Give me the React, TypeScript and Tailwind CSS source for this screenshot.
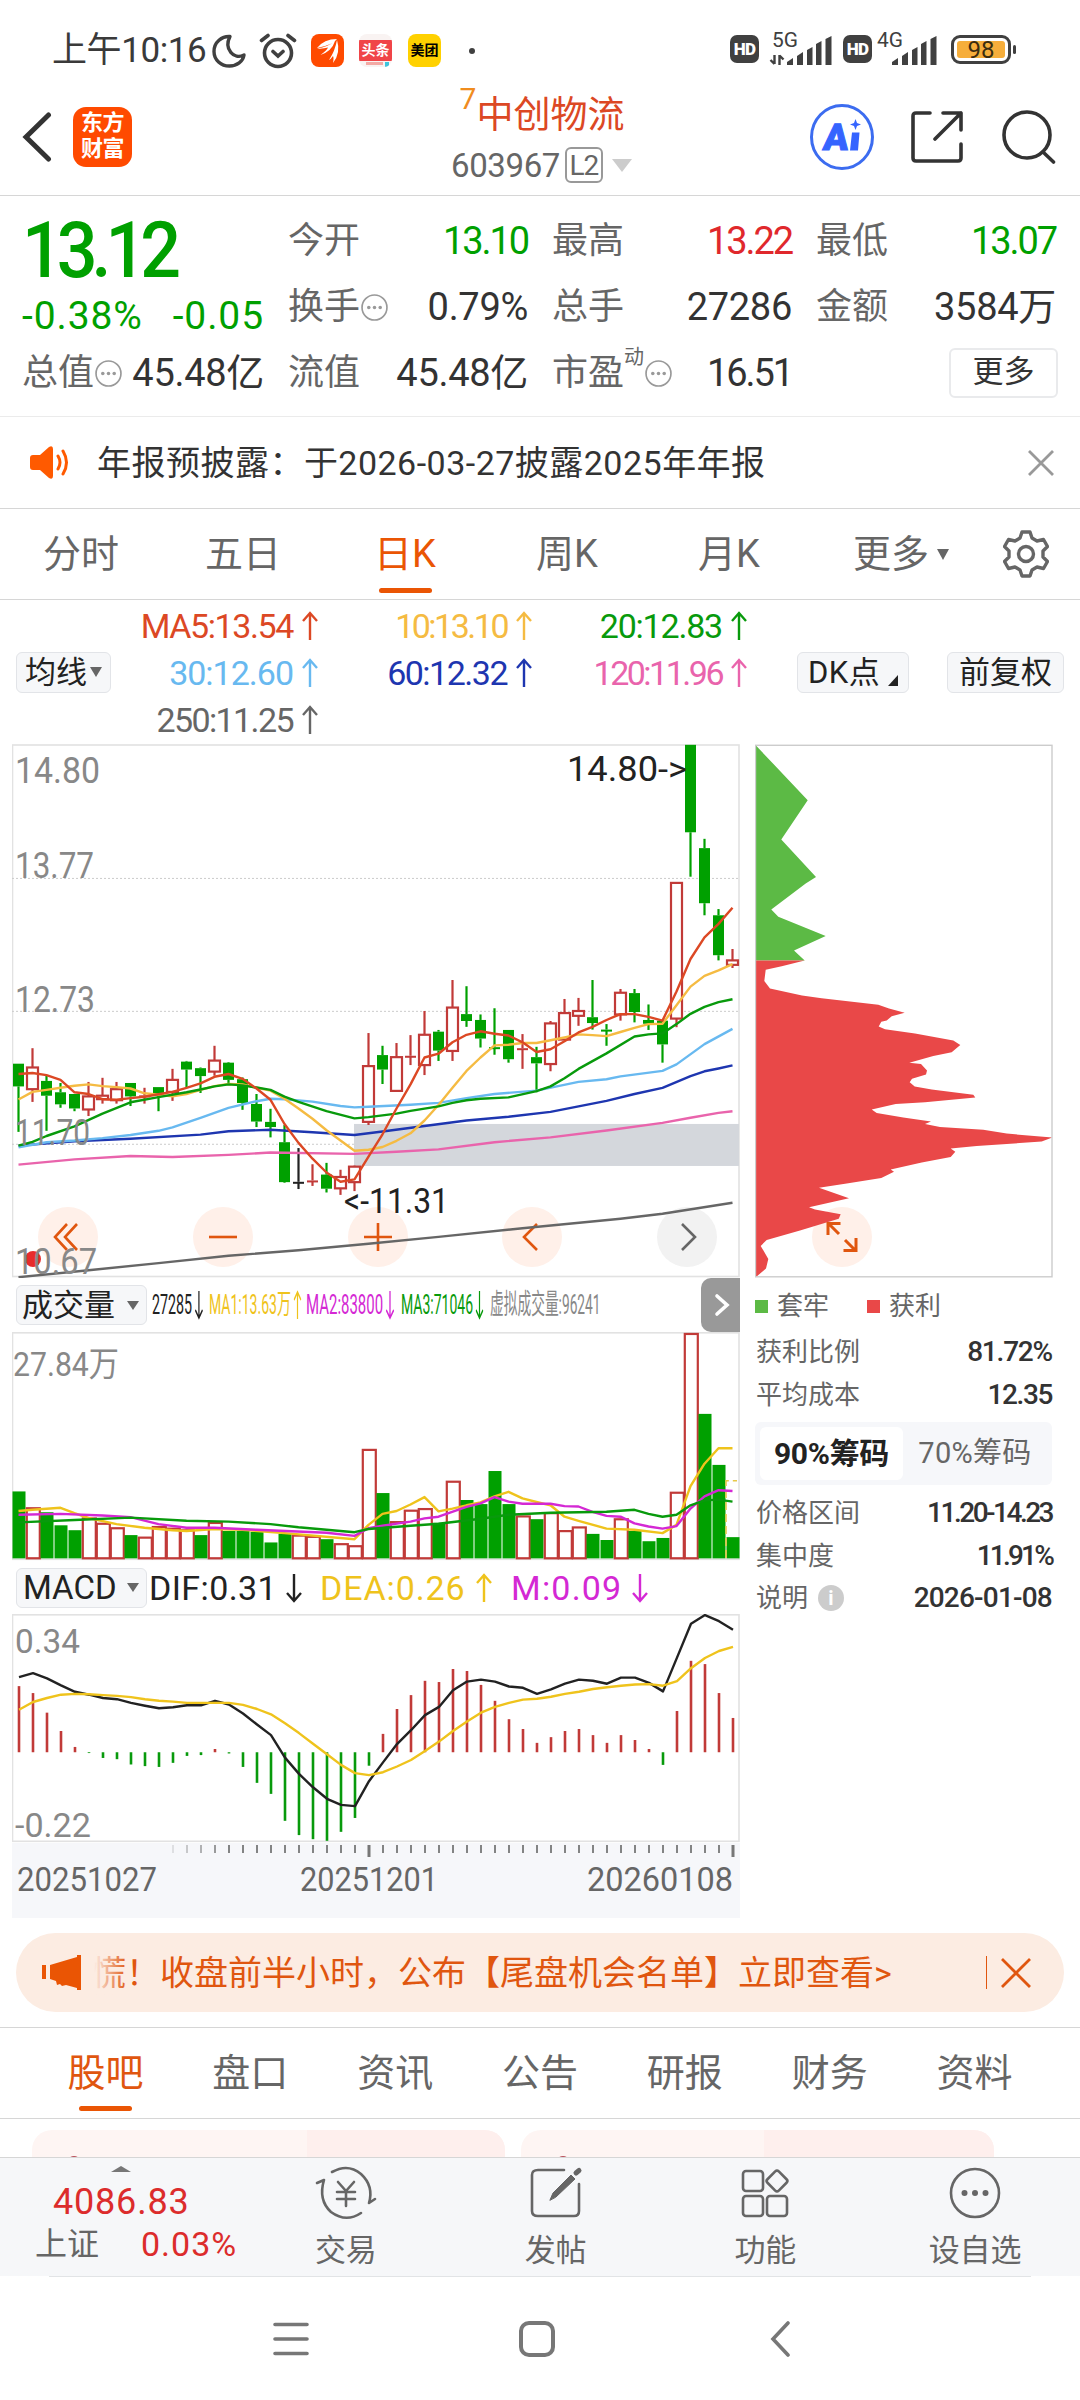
import type { ReactNode } from 'react'

const RED = '#c13a38'
const GREEN = '#00a000'
const FONT = "font-[Roboto,'Noto_Sans_CJK_SC',sans-serif]"

const STEP = 14

// [type, high, body top, body bottom, low]
const candles: [string, number, number, number, number][] = [
  ['g', 940, 940, 1006, 1138], ['r', 895, 951, 1014, 1051], ['g', 975, 990, 1033, 1135], ['g', 996, 1023, 1058, 1068],
  ['g', 1028, 1028, 1070, 1078], ['r', 993, 1035, 1073, 1092], ['r', 981, 1033, 1043, 1056], ['r', 993, 1014, 1046, 1056],
  ['g', 996, 996, 1035, 1063], ['r', 1010, 1032, 1036, 1056], ['g', 1008, 1008, 1030, 1078], ['r', 955, 987, 1022, 1048],
  ['g', 932, 934, 957, 1010], ['g', 951, 953, 976, 1025], ['r', 888, 931, 963, 975], ['g', 935, 937, 987, 998],
  ['g', 980, 985, 1054, 1074], ['g', 1028, 1057, 1108, 1124], ['g', 1071, 1109, 1124, 1154], ['g', 1118, 1168, 1284, 1286],
  ['k', 1185, 1283, 1286, 1304], ['r', 1232, 1279, 1282, 1295], ['g', 1228, 1262, 1303, 1314], ['r', 1248, 1269, 1302, 1321],
  ['r', 1236, 1239, 1284, 1310], ['r', 851, 947, 1109, 1118], ['g', 888, 915, 957, 999], ['r', 880, 921, 1019, 1021],
  ['r', 857, 917, 920, 944], ['r', 787, 856, 944, 973], ['g', 842, 847, 902, 932], ['r', 697, 777, 903, 932],
  ['g', 715, 796, 816, 833], ['g', 797, 813, 867, 893], ['g', 779, 892, 896, 914], ['g', 842, 842, 927, 937],
  ['r', 854, 895, 900, 955], ['g', 891, 921, 939, 1023], ['r', 816, 823, 941, 962], ['r', 752, 793, 870, 870],
  ['r', 749, 787, 801, 830], ['g', 697, 805, 822, 841], ['g', 825, 841, 845, 888], ['r', 723, 734, 797, 815],
  ['g', 723, 735, 790, 820], ['g', 768, 813, 824, 842], ['g', 812, 815, 884, 937], ['r', 413, 415, 809, 834],
  ['g', 14, 14, 268, 397], ['g', 287, 314, 474, 509], ['g', 491, 509, 625, 640], ['r', 607, 640, 653, 662],
]

const ma5 = [970, 967, 973, 987, 1023, 1028, 1043, 1045, 1040, 1036, 1029, 1022, 1010, 997, 978, 970, 984, 1012, 1045, 1115, 1170, 1216, 1256, 1283, 1276, 1210, 1145, 1070, 1000, 922, 911, 878, 856, 846, 853, 858, 878, 906, 898, 875, 849, 833, 813, 796, 796, 804, 815, 730, 636, 573, 534, 487]
const ma10 = [1044, 1022, 1016, 1010, 1004, 1000, 1005, 1008, 1012, 1026, 1030, 1035, 1028, 1016, 1005, 999, 1000, 1010, 1018, 1042, 1070, 1100, 1133, 1163, 1193, 1190, 1182, 1164, 1142, 1105, 1060, 1010, 961, 922, 887, 885, 880, 880, 872, 864, 855, 857, 860, 848, 836, 825, 824, 770, 716, 685, 669, 651]

// sparse lines are kept as index, value pairs
const ma20 = [0, 1178, 1, 1167, 2, 1150, 4, 1122, 6, 1085, 8, 1052, 10, 1037, 12, 1023, 13, 1015, 14, 1006, 15, 1000, 16, 1003, 17, 1009, 18, 1016, 19, 1036, 20, 1051, 22, 1078, 24, 1099, 25, 1095, 27, 1085, 28, 1077, 30, 1064, 31, 1054, 32, 1046, 33, 1042, 35, 1038, 37, 1020, 38, 1006, 39, 982, 40, 955, 42, 910, 44, 861, 45, 855, 46, 852, 47, 825, 48, 795, 49, 775, 50, 761, 51, 753]
const ma30 = [0, 1183, 2, 1168, 4, 1163, 6, 1156, 8, 1147, 10, 1135, 11, 1125, 13, 1097, 15, 1068, 17, 1049, 18, 1042, 19, 1043, 21, 1050, 23, 1063, 24, 1067, 25, 1065, 28, 1059, 30, 1054, 32, 1040, 34, 1028, 37, 1018, 40, 993, 42, 985, 43, 977, 46, 961, 47, 942, 49, 883, 51, 839]
const ma60 = [0, 1178, 4, 1165, 8, 1158, 13, 1146, 15, 1136, 18, 1132, 21, 1139, 24, 1147, 26, 1137, 29, 1121, 32, 1105, 35, 1094, 38, 1080, 40, 1064, 42, 1048, 44, 1028, 46, 1010, 48, 976, 49, 962, 50, 954, 51, 945]
const ma120 = [0, 1233, 4, 1218, 8, 1208, 11, 1211, 15, 1205, 18, 1198, 24, 1202, 27, 1196, 30, 1189, 34, 1168, 38, 1154, 42, 1134, 46, 1112, 48, 1097, 50, 1083, 51, 1078]
const ma250 = [0, 1560, 5, 1540, 10, 1519, 15, 1498, 20, 1482, 25, 1463, 30, 1443, 36, 1418, 43, 1390, 46, 1376, 51, 1344]

const volumes = [518, 558, 569, 601, 613, 583, 596, 607, 625, 630, 604, 608, 612, 625, 594, 615, 615, 617, 643, 622, 625, 628, 635, 646, 651, 415, 522, 592, 564, 560, 595, 493, 539, 549, 468, 549, 578, 586, 570, 614, 605, 622, 637, 585, 615, 640, 632, 520, 131, 328, 453, 630]
const volumeTypes = 'grgggrrrgrrrrgrgggggrrgrrrgrrrgrggggrgrrrggrgggrrggg'
const volMa1 = [0, 566, 1, 563, 3, 558, 4, 571, 5, 583, 7, 598, 9, 607, 11, 613, 12, 615, 14, 610, 16, 612, 19, 620, 24, 635, 25, 600, 26, 573, 27, 566, 28, 550, 29, 532, 30, 567, 31, 560, 32, 552, 33, 545, 34, 530, 35, 519, 36, 535, 37, 544, 38, 552, 39, 580, 40, 590, 42, 609, 44, 612, 46, 620, 47, 600, 48, 505, 49, 450, 50, 412, 51, 412]
const volMa2 = [0, 575, 3, 573, 6, 577, 8, 581, 10, 598, 12, 607, 14, 607, 17, 612, 22, 619, 24, 627, 25, 608, 26, 602, 28, 592, 29, 584, 30, 580, 32, 556, 33, 547, 34, 532, 35, 543, 36, 548, 38, 548, 39, 554, 40, 555, 41, 568, 42, 578, 43, 580, 44, 596, 45, 604, 46, 609, 47, 603, 48, 560, 49, 530, 50, 515, 51, 517]
const volMa3 = [0, 594, 4, 588, 8, 582, 12, 590, 15, 592, 18, 598, 20, 606, 24, 618, 25, 610, 28, 602, 30, 597, 33, 585, 35, 575, 38, 570, 42, 568, 44, 563, 45, 573, 46, 580, 47, 575, 48, 552, 49, 540, 50, 538, 51, 543]

const macd = [995, 1012, 1060, 1105, 1144, 1159, 1171, 1174, 1187, 1191, 1193, 1183, 1166, 1164, 1149, 1160, 1193, 1232, 1259, 1325, 1360, 1370, 1374, 1352, 1318, 1190, 1112, 1051, 1017, 982, 985, 953, 958, 992, 1031, 1076, 1100, 1134, 1120, 1105, 1100, 1115, 1134, 1115, 1127, 1149, 1188, 1056, 933, 941, 1012, 1073]
const dif = [973, 963, 976, 993, 1009, 1016, 1024, 1027, 1036, 1043, 1049, 1047, 1042, 1042, 1031, 1040, 1062, 1089, 1115, 1170, 1210, 1243, 1271, 1286, 1289, 1228, 1182, 1137, 1103, 1066, 1046, 1005, 984, 979, 984, 996, 999, 1014, 1003, 989, 979, 982, 989, 974, 974, 987, 1008, 925, 842, 821, 836, 857]
const dea = [1053, 1034, 1024, 1016, 1014, 1015, 1017, 1019, 1022, 1027, 1031, 1033, 1036, 1036, 1036, 1036, 1041, 1051, 1064, 1086, 1110, 1136, 1162, 1188, 1208, 1213, 1206, 1192, 1176, 1154, 1131, 1105, 1082, 1060, 1046, 1036, 1028, 1026, 1021, 1014, 1009, 1002, 998, 994, 991, 990, 994, 983, 951, 926, 909, 899]

const trapped = [47, 15, 203, 175, 124, 289, 228, 398, 197, 417, 94, 492, 115, 513, 257, 569, 162, 611, 194, 640, 47, 640]
const profit = [47, 640, 194, 640, 125, 657, 77, 667, 73, 700, 90, 722, 186, 742, 245, 750, 415, 769, 447, 780, 494, 792, 455, 802, 440, 815, 424, 818, 416, 832, 435, 840, 525, 852, 640, 873, 661, 886, 635, 907, 580, 918, 508, 937, 543, 941, 561, 960, 558, 971, 516, 984, 509, 994, 524, 1006, 575, 1015, 700, 1030, 706, 1038, 555, 1052, 467, 1057, 395, 1073, 410, 1083, 490, 1096, 573, 1108, 555, 1115, 600, 1124, 730, 1132, 800, 1143, 937, 1154, 905, 1166, 710, 1179, 632, 1186, 646, 1196, 632, 1211, 545, 1227, 452, 1247, 462, 1254, 424, 1272, 320, 1288, 237, 1300, 327, 1331, 207, 1357, 225, 1363, 302, 1377, 296, 1390, 180, 1424, 80, 1452, 62, 1469, 85, 1507, 78, 1535, 47, 1560]

const px = (i: number) => 18.5 + i * STEP
const py = (v: number) => v / 2.904
const vy = (v: number) => v / 2.45

const dense = (list: number[], y: (v: number) => number, dx = 0) => list.map((v, i) => `${px(i) + dx},${y(v).toFixed(1)}`).join(' ')
const sparse = (list: number[], y: (v: number) => number) => {
  const out: string[] = []
  for (let i = 0; i < list.length; i += 2) out.push(`${px(list[i])},${y(list[i + 1]).toFixed(1)}`)
  return out.join(' ')
}
const chip = (list: number[]) => {
  const out: string[] = []
  for (let i = 0; i < list.length; i += 2) out.push(`${(list[i] / 3).toFixed(1)},${py(list[i + 1]).toFixed(1)}`)
  return out.join(' ')
}

const Line = ({ points, color, w = 2.4 }: { points: string; color: string; w?: number }) => (
  <polyline points={points} fill="none" stroke={color} strokeWidth={w} strokeLinejoin="round" />
)

const Label = ({ x, y, w, size = 34, color = '#888', children }: { x: number; y: number; w: number; size?: number; color?: string; children: string }) => (
  <text x={x} y={y} textLength={w} lengthAdjust="spacingAndGlyphs" fontSize={size} fill={color}>
    {children}
  </text>
)

const Arrow = ({ down = false, className = '' }: { down?: boolean; className?: string }) => (
  <svg viewBox="0 0 16 30" className={`w-4 h-[30px] shrink-0 ${down ? 'rotate-180' : ''} ${className}`} fill="none" stroke="currentColor" strokeWidth="2.4">
    <path d="M8 29V2M1 10L8 2L15 10" />
  </svg>
)

const Dots = () => (
  <svg viewBox="0 0 26 26" className="w-[27px] h-[27px] shrink-0 ml-px" fill="none" stroke="#999" strokeWidth="1.6">
    <circle cx="13" cy="13" r="12" />
    <g fill="#999" stroke="none">
      <circle cx="7.5" cy="13" r="1.7" />
      <circle cx="13" cy="13" r="1.7" />
      <circle cx="18.5" cy="13" r="1.7" />
    </g>
  </svg>
)

const Signal = ({ text, transfer = false }: { text: string; transfer?: boolean }) => (
  <svg viewBox="0 0 62 34" className="w-[62px] h-[34px] overflow-visible" fill="#404040">
    <text x="2" y="14.500" fontSize="20" textLength="26" lengthAdjust="spacingAndGlyphs">{text}</text>
    {transfer && <path d="M4.500 23v9M4.500 32l-4 -4M9.500 33v-10M9.500 23.500l4 4" stroke="#404040" strokeWidth="2.4" fill="none" />}
    <path d="M17 33v-3l6 -4v7zM27 33v-9l6 -4v13zM37 33v-15l5.500 -3v18zM46 33v-21l5.500 -3v24zM55.500 33v-26l6 -3v29z" />
  </svg>
)

const Hd = () => (
  <div className="w-[29px] h-[28px] rounded-[7px] bg-[#404040] text-white text-[17px] leading-none font-black flex items-center justify-center tracking-[-0.600px]">HD</div>
)

const StatusBar = () => (
  <div className="h-[98px] flex items-center text-[#3a3a3a] pl-[52px] pr-[64px]">
    <span className="text-[35px] leading-none w-[158px] whitespace-nowrap tracking-[-0.400px] pt-[2px]">上午10:16</span>
    <svg viewBox="0 0 34 34" className="w-[34px] h-[34px] mt-1 ml-[2px]" fill="none" stroke="#404040" strokeWidth="3.4" strokeLinejoin="round">
      <path d="M18 2.500C10 2 2 8 2 17.500C2 26 9 32 17.500 32C25 32 31 27.500 32 21C22 26 11.500 15 18 2.500Z" />
    </svg>
    <svg viewBox="0 0 38 36" className="w-[38px] h-[36px] mt-1 ml-[13px]" fill="none" stroke="#404040" strokeWidth="3.6" strokeLinecap="round">
      <circle cx="19" cy="20" r="13.500" />
      <path d="M2.500 7.500L9 2.500M35.500 7.500L29 2.500M14 18.500l5 4.500l5 -4.500" />
    </svg>
    <svg viewBox="0 0 33 33" className="w-[33px] h-[33px] ml-[14px] mt-[2px]">
      <rect width="33" height="33" rx="8" fill="#ff4a00" />
      <path d="M6 14Q13 5 26 5Q22 11 6 14ZM6 14.500Q17 13 24 7Q21 17 9.500 21Q16 16 17 13.500Q12 15 6 14.500ZM18 26Q24 17 26 6Q30 19 22 29Q23 24 22 22Q20 25 18 26Z" fill="#fff" />
    </svg>
    <div className="ml-[15px] mt-[2px] w-[33px] h-[33px] rounded-[8px] bg-[#f9f3f2] overflow-hidden flex flex-col">
      <div className="mt-[6px] h-[21px] bg-[#f04448] text-white text-[14px] leading-[20px] font-bold text-center whitespace-nowrap">头条</div>
      <div className="ml-[7px] mt-[1px] flex gap-[2px]">
        <span className="w-[17px] h-[3px] bg-[#f3a9a4]" />
        <span className="w-[4px] h-[5px] bg-[#3fc4dc]" />
      </div>
    </div>
    <div className="ml-[16px] mt-[2px] w-[33px] h-[33px] rounded-[8px] bg-[#ffd100] text-black text-[14px] leading-[32px] font-bold text-center whitespace-nowrap">美团</div>
    <div className="ml-[28px] mt-[3px] w-[6px] h-[6px] rounded-full bg-[#404040]" />
    <div className="ml-auto flex items-center">
      <Hd />
      <div className="ml-[11px]"><Signal text="5G" transfer /></div>
      <div className="ml-[11px]"><Hd /></div>
      <div className="ml-[3px]"><Signal text="4G" /></div>
      <div className="ml-[14px] w-[60px] h-[29px] rounded-[9px] border-[3px] border-[#404040] p-[3px]">
        <div className="h-full rounded-[3px] bg-[#f6ae3b] text-[#3a2c10] text-[24px] leading-[18px] text-center">98</div>
      </div>
      <div className="ml-[2px] w-[3px] h-[9px] rounded-full bg-[#404040]" />
    </div>
  </div>
)

const Header = () => (
  <header className="h-[98px] border-b border-[#d6d6d6] flex items-center justify-between pl-[22px] pr-[24px] pb-[20px]">
    <div className="flex items-center w-[335px]">
      <svg viewBox="0 0 30 50" className="w-[30px] h-[50px]" fill="none" stroke="#333" strokeWidth="5" strokeLinecap="round">
        <path d="M26.500 3L4 25L26.500 47" />
      </svg>
      <div className="ml-[21px] w-[59px] h-[60px] rounded-[13px] bg-[#ff4a00] text-white text-[22px] leading-[26px] font-bold text-center pt-[3px] tracking-[-0.500px]">
        东方
        <br />
        财富
      </div>
    </div>
    <div className="flex flex-col items-center w-[190px] pt-[6px]">
      <div className="relative text-[37px] leading-[50px] h-[51px] text-[#dc4824] pl-[18px] whitespace-nowrap">
        <span className="absolute left-[1px] top-[-12px] text-[30px] leading-[40px] text-[#f08c1e]">7</span>
        中创物流
      </div>
      <div className="flex items-center text-[#666] text-[33px] leading-none h-[46px]">
        <span className="tracking-[-0.400px]">603967</span>
        <span className="ml-[5px] w-[38px] h-[36px] border-2 border-[#999] rounded-[6px] text-[28px] leading-[33px] text-center tracking-[-1px]">L2</span>
        <span className="ml-[9px] border-x-[10px] border-x-transparent border-t-[13px] border-t-[#ccc]" />
      </div>
    </div>
    <div className="flex items-center justify-end w-[330px]">
      <svg viewBox="0 0 64 66" className="w-[64px] h-[66px]">
        <ellipse cx="32" cy="33" rx="30.500" ry="31.500" fill="none" stroke="#3c6cf0" strokeWidth="3" />
        <text x="17" y="46" fontSize="37" fontWeight="900" fill="#3564ff" stroke="#3564ff" transform="skewX(-6)">A</text>
        <path d="M42 28.500h7.500l-1.500 18h-8zM45.500 15l1.500 4l4 1.500l-4 1.500l-1.500 4l-1.500 -4l-4 -1.500l4 -1.500z" fill="#3564ff" />
      </svg>
      <svg viewBox="0 0 52 52" className="ml-[37px] w-[52px] h-[52px]" fill="none" stroke="#333" strokeWidth="3.6" strokeLinecap="round" strokeLinejoin="round">
        <path d="M19 2H5Q2 2 2 5V47Q2 50 5 50H47Q50 50 50 47V33M32 2H50V19M50 2L24 28" />
      </svg>
      <svg viewBox="0 0 54 54" className="ml-[39px] w-[54px] h-[54px]" fill="none" stroke="#333" strokeWidth="3.6" strokeLinecap="round">
        <circle cx="25" cy="25" r="23" />
        <path d="M41 42L51.500 52" />
      </svg>
    </div>
  </header>
)

const Stat = ({ label, value, color = 'text-[#333]', dots = false, sup = '' }: { label: string; value: string; color?: string; dots?: boolean; sup?: string }) => (
  <div className="flex items-center justify-between h-[66px] whitespace-nowrap">
    <span className="text-[36px] leading-none text-[#666] flex items-center">
      {label}
      {sup && <span className="text-[20px] leading-none -mt-[32px]">{sup}</span>}
      {dots && <Dots />}
    </span>
    <span className={`text-[38px] leading-none ${value.includes('1') ? 'tracking-[-2.100px]' : 'tracking-[-0.300px]'} ${color}`}>{value}</span>
  </div>
)

const Quote = () => (
  <section className="h-[221px] border-b border-[#ebebeb] px-6 pt-[12px] grid grid-cols-4 gap-x-6 content-start">
    <div className="-ml-[2px]">
      <div className="h-[77px] text-[78px] leading-[86px] text-[#00a000] font-medium">
        <span className="inline-block origin-left scale-x-[0.920] tracking-[-6.500px]">13.12</span>
      </div>
      <div className="flex justify-between items-center h-[55px] pt-[7px] text-[39px] leading-none text-[#00a000] tracking-[0.900px]">
        <span>-0.38%</span>
        <span>-0.05</span>
      </div>
      <Stat label="总值" value="45.48亿" dots />
    </div>
    <div>
      <Stat label="今开" value="13.10" color="text-[#00a000]" />
      <Stat label="换手" value="0.79%" dots />
      <Stat label="流值" value="45.48亿" />
    </div>
    <div>
      <Stat label="最高" value="13.22" color="text-[#e0282c]" />
      <Stat label="总手" value="27286" />
      <Stat label="市盈" value="16.51" sup="动" dots />
    </div>
    <div>
      <Stat label="最低" value="13.07" color="text-[#00a000]" />
      <Stat label="金额" value="3584万" />
      <div className="flex justify-end h-[66px] items-center -mr-[2px]">
        <span className="w-[109px] h-[50px] border-2 border-[#e9eaec] rounded-[6px] text-[31px] leading-[44px] text-center text-[#333]">更多</span>
      </div>
    </div>
  </section>
)

const Notice = () => (
  <section className="h-[92px] border-b border-[#d6d6d6] flex items-center pl-[30px] pr-[25px]">
    <svg viewBox="0 0 39 33" className="w-[39px] h-[33px]" fill="#ff5a00">
      <path d="M3 9h7L19 1q4 -2 4 2v27q0 4 -4 2L10 24H3q-3 0 -3 -3V12q0 -3 3 -3z" />
      <path d="M28 10q4 6.500 0 13M33 5q7 11.500 0 23" fill="none" stroke="#ff5a00" strokeWidth="3" strokeLinecap="round" />
    </svg>
    <span className="ml-[28px] text-[34px] leading-none tracking-[0.480px] text-[#333] whitespace-nowrap">年报预披露：于2026-03-27披露2025年年报</span>
    <svg viewBox="0 0 28 28" className="ml-auto w-[28px] h-[28px]" stroke="#999" strokeWidth="2.8">
      <path d="M2 2L26 26M26 2L2 26" />
    </svg>
  </section>
)

const PeriodTabs = () => (
  <nav className="h-[91px] border-b border-[#d6d6d6] flex items-center text-[38px] leading-none text-[#666]">
    {['分时', '五日', '日K', '周K', '月K'].map((tab) => (
      <div key={tab} className={`relative w-[162px] h-full flex items-center justify-center ${tab === '日K' ? 'text-[#ea5504]' : ''}`}>
        {tab}
        {tab === '日K' && <span className="absolute bottom-[6px] w-[53px] h-[5px] rounded-full bg-[#ea5504]" />}
      </div>
    ))}
    <div className="w-[182px] flex items-center justify-center">
      更多
      <span className="ml-[8px] border-x-[6.500px] border-x-transparent border-t-[11px] border-t-[#666]" />
    </div>
    <svg viewBox="0 0 46 48" className="ml-[11px] w-[46px] h-[48px]" fill="none" stroke="#666" strokeWidth="3.4" strokeLinejoin="round">
      <path d="M19 2h8l2 6l5 3l6.500 -1.500l4 7l-4.500 4.500v6l4.500 4.500l-4 7l-6.500 -1.500l-5 3l-2 6h-8l-2 -6l-5 -3l-6.500 1.500l-4 -7l4.500 -4.500v-6l-4.500 -4.500l4 -7L12 11l5 -3z" />
      <circle cx="23" cy="24" r="7.500" />
    </svg>
  </nav>
)

const Ma = ({ text, color, spacing }: { text: string; color: string; spacing: string }) => (
  <div className={`h-[47px] pt-[2px] flex items-center justify-end gap-[9px] ${color}`}>
    <span className={spacing}>{text}</span>
    <Arrow />
  </div>
)

const MaLegend = () => (
  <section className="h-[144px] flex items-center pl-[16px] pr-[16px] text-[#222]">
    <div className="w-[95px] h-[41px] bg-[#f6f7f9] border border-[#e2e4e8] rounded-[6px] flex items-center justify-center text-[31px] leading-none">
      均线
      <span className="ml-[3px] border-x-[6px] border-x-transparent border-t-[10px] border-t-[#666]" />
    </div>
    <div className="w-[636px] grid grid-cols-[207px_214px_215px] text-[34px] leading-none whitespace-nowrap">
      <Ma text="MA5:13.54" color="text-[#dc4824]" spacing="tracking-[-1.400px]" />
      <Ma text="10:13.10" color="text-[#f5bb42]" spacing="tracking-[-2.500px]" />
      <Ma text="20:12.83" color="text-[#089a0c]" spacing="tracking-[-1.200px]" />
      <Ma text="30:12.60" color="text-[#68b9f0]" spacing="tracking-[-1px]" />
      <Ma text="60:12.32" color="text-[#1e36b0]" spacing="tracking-[-1.500px]" />
      <Ma text="120:11.96" color="text-[#e964ac]" spacing="tracking-[-2.500px]" />
      <Ma text="250:11.25" color="text-[#666]" spacing="tracking-[-1.600px]" />
    </div>
    <div className="ml-auto w-[112px] h-[41px] bg-[#f6f7f9] border border-[#e2e4e8] rounded-[6px] flex items-center pl-[10px] text-[31px] leading-none">
      <span className="tracking-[0.500px]">DK点</span>
      <svg viewBox="0 0 10 11" className="w-[10px] h-[11px] ml-[8px] mt-[17px]"><path d="M10 0V11H0z" fill="#222" /></svg>
    </div>
    <div className="ml-[38px] w-[117px] h-[41px] bg-[#f6f7f9] border border-[#e2e4e8] rounded-[6px] flex items-center justify-center text-[31px] leading-none">前复权</div>
  </section>
)

const CircleButton = ({ x, gray = false, d }: { x: number; gray?: boolean; d: string }) => (
  <g>
    <circle cx={x} cy="497" r="30" fill={gray ? '#f2f2f2' : '#fff0e9'} />
    <path transform={`translate(${x} 497)`} d={d} fill="none" stroke={gray ? '#666' : '#e0560f'} strokeWidth="2.6" />
  </g>
)

const KLine = () => (
  <svg viewBox="12 4 728 534" className="block w-[728px] h-[534px]">
    <rect x="12.500" y="5" width="726.500" height="531.500" fill="none" stroke="#e2e2e2" strokeWidth="1.600" />
    {[402, 788, 1174].map((v) => (
      <line key={v} x1="12" x2="739" y1={py(v)} y2={py(v)} stroke="#ccc" strokeDasharray="2 2" />
    ))}
    <CircleButton x={68} d="M-1 -13L-13 0L-1 13M9 -13L-3 0L9 13" />
    <CircleButton x={223} d="M-14 0H14" />
    <CircleButton x={378} d="M-14 0H14M0 -14V14" />
    <CircleButton x={532} d="M5 -13L-8 0L5 13" />
    <CircleButton x={687} gray d="M-5 -13L8 0L-5 13" />
    <rect x="354" y={py(1115)} width="385" height={py(122)} fill="#d4d7dc" />
    {candles.map(([type, high, top, bottom, low], i) => {
      const color = type === 'r' ? RED : type === 'g' ? GREEN : '#222'
      const x = px(i)
      const h = Math.max(py(bottom - top), 2)
      const hollow = type === 'r' && bottom - top > 9
      return (
        <g key={i}>
          <line x1={x} x2={x} y1={py(high)} y2={py(top)} stroke={color} strokeWidth="2.2" />
          <line x1={x} x2={x} y1={py(bottom)} y2={py(low)} stroke={color} strokeWidth="2.2" />
          {hollow ? (
            <rect x={x - 5.5} y={py(top)} width="11" height={h} fill="#fff" stroke={color} strokeWidth="2.2" />
          ) : (
            <rect x={x - 5.5} y={py(top)} width="11" height={h} fill={color} />
          )}
        </g>
      )
    })}
    <Line points={sparse(ma250, py)} color="#666" />
    <Line points={sparse(ma120, py)} color="#e964ac" />
    <Line points={sparse(ma60, py)} color="#1e36b0" />
    <Line points={sparse(ma30, py)} color="#68b9f0" />
    <Line points={dense(ma10, py)} color="#f5bb42" />
    <Line points={sparse(ma20, py)} color="#089a0c" />
    <Line points={dense(ma5, py)} color="#dc4824" />
    <circle cx="33" cy="519" r="8" fill="#e82c2c" />
    <Label x={15} y={43} w={85} size={36}>14.80</Label>
    <Label x={15} y={138} w={79} size={36}>13.77</Label>
    <Label x={15} y={272} w={80} size={36}>12.73</Label>
    <Label x={15} y={405} w={75} size={36}>11.70</Label>
    <Label x={15} y={534} w={82} size={36}>10.67</Label>
    <Label x={567} y={41} w={120} size={35} color="#222">14.80-&gt;</Label>
    <Label x={344} y={473} w={105} size={35} color="#222">&lt;-11.31</Label>
  </svg>
)

const Picker = ({ text }: { text: string }) => (
  <div className="ml-[4px] w-[131px] h-[40px] shrink-0 bg-[#f6f7f9] border border-[#e2e4e8] rounded-[6px] flex items-center justify-between pl-[5px] pr-[7px] text-[31px] leading-none text-[#222]">
    <span className={text === 'MACD' ? 'text-[33px] pl-px -mr-2' : ''}>{text}</span>
    <span className="border-x-[6.500px] border-x-transparent border-t-[9px] border-t-[#666]" />
  </div>
)

const Slim = ({ width, className, children }: { width: string; className: string; children: ReactNode }) => (
  <div className={`${width} shrink-0 overflow-visible whitespace-nowrap text-[28px] leading-none`}>
    <span className={`inline-flex items-center origin-left ${className}`}>{children}</span>
  </div>
)

const VolumeHeader = () => (
  <div className="h-[54px] flex items-center">
    <Picker text="成交量" />
    <div className="flex items-center w-[554px] pl-[5px]">
      <Slim width="w-[57px]" className="text-[#222] scale-x-[0.510]">27285<Arrow down className="ml-[5px]" /></Slim>
      <Slim width="w-[97px]" className="text-[#efc31c] scale-x-[0.500]">MA1:13.63万<Arrow className="ml-[5px]" /></Slim>
      <Slim width="w-[95px]" className="text-[#d428d4] scale-x-[0.535]">MA2:83800<Arrow down className="ml-[5px]" /></Slim>
      <Slim width="w-[89px]" className="text-[#089a0c] scale-x-[0.500]">MA3:71046<Arrow down className="ml-[5px]" /></Slim>
      <Slim width="w-[110px]" className="text-[#888] scale-x-[0.490]">虚拟成交量:96241</Slim>
    </div>
    <div className="ml-auto w-[39px] h-full bg-[#999] rounded-l-[10px] flex items-center justify-center">
      <svg viewBox="0 0 16 24" className="w-[16px] h-[24px] ml-[3px]" fill="none" stroke="#fff" strokeWidth="3.600" strokeLinecap="round">
        <path d="M3 3L13 12L3 21" />
      </svg>
    </div>
  </div>
)

const VolumeChart = () => (
  <svg viewBox="12 52 728 229" className="block w-[728px] h-[229px]">
    <rect x="12.500" y="52.800" width="726.500" height="226.500" fill="none" stroke="#e2e2e2" strokeWidth="1.600" />
    {volumes.map((v, i) =>
      volumeTypes[i] === 'r' ? (
        <rect key={i} x={px(i) - 5.7} y={vy(v) + 0.5} width="13" height={vy(683 - v) - 1} fill="#fff" stroke={RED} strokeWidth="2.2" />
      ) : (
        <rect key={i} x={px(i) - 6} y={vy(v)} width="13" height={vy(682 - v)} fill={GREEN} />
      )
    )}
    <path d={`M726 278V${vy(492)}H737`} fill="none" stroke="#e8c84a" strokeWidth="1.600" strokeDasharray="8 4" />
    <Line points={sparse(volMa1, vy)} color="#efc31c" />
    <Line points={sparse(volMa2, vy)} color="#d428d4" />
    <Line points={sparse(volMa3, vy)} color="#089a0c" />
    <Label x={13} y={96} w={106} size={34}>27.84万</Label>
  </svg>
)

const MacdHeader = () => (
  <div className="h-[53px] flex items-center text-[34px] leading-none whitespace-nowrap">
    <Picker text="MACD" />
    <div className="w-[170px] pl-[2px] flex items-center gap-[9px] text-[#222]"><span className="tracking-[0.400px]">DIF:0.31</span><Arrow down /></div>
    <div className="w-[192px] pl-[3px] flex items-center gap-[10px] text-[#efc31c]"><span className="tracking-[0.900px]">DEA:0.26</span><Arrow /></div>
    <div className="flex items-center gap-[10px] pl-[2px] text-[#d428d4]"><span className="tracking-[1.200px]">M:0.09</span><Arrow down /></div>
  </div>
)

const MacdChart = () => (
  <svg viewBox="12 334 728 229" className="block w-[728px] h-[229px]">
    <rect x="12.500" y="334.800" width="726.500" height="226.500" fill="none" stroke="#e2e2e2" strokeWidth="1.600" />
    {macd.map((v, i) => (
      <line key={i} x1={px(i) + 0.5} x2={px(i) + 0.5} y1={vy(1157)} y2={vy(v)} stroke={v < 1157 ? RED : '#089a0c'} strokeWidth="2.6" />
    ))}
    <Line points={dense(dif, vy, 0.5)} color="#222" />
    <Line points={dense(dea, vy, 0.5)} color="#efc31c" />
    <Label x={15} y={373} w={65} size={33}>0.34</Label>
    <Label x={15} y={557} w={76} size={33}>-0.22</Label>
  </svg>
)

const DateAxis = () => (
  <svg viewBox="12 563 728 75" className="block w-[728px] h-[75px]">
    <rect x="12" y="563" width="728" height="75" fill="#f6f7fa" />
    {candles.map((_, i) => {
      if (i < 11) return null
      const major = i === 25 || i === 51
      return (
        <line
          key={i}
          x1={px(i) + 0.5}
          x2={px(i) + 0.5}
          y1="565"
          y2={major ? 577 : 573}
          stroke="#777"
          strokeWidth={major ? 3 : 1.8}
          opacity={i < 15 ? (i - 10) * 0.2 : 1}
        />
      )
    })}
    <Label x={17} y={611} w={140} size={33} color="#666">20251027</Label>
    <Label x={300} y={611} w={138} size={33} color="#666">20251201</Label>
    <Label x={587} y={611} w={146} size={33} color="#666">20260108</Label>
  </svg>
)

const Row = ({ label, value, info = false, spacing = 'tracking-[-0.800px]' }: { label: string; value: string; info?: boolean; spacing?: string }) => (
  <div className="h-[42.500px] flex items-center justify-between text-[26px] leading-none">
    <span className="text-[#666] flex items-center pl-px">
      {label}
      {info && <span className="ml-[10px] w-[26px] h-[26px] rounded-full bg-[#ccc] text-white text-[20px] leading-[26px] font-bold text-center">i</span>}
    </span>
    <span className={`text-[28px] font-medium text-[#333] ${spacing}`}>{value}</span>
  </div>
)

const ChipPanel = () => (
  <aside className="w-[297px] ml-[15px]">
    <svg viewBox="15 4 298 534" className="block w-[298px] h-[534px]">
      <circle cx="102" cy="497" r="30" fill="#fff0e9" />
      <polygon points={chip(trapped)} fill="#5cba45" />
      <polygon points={chip(profit)} fill="#e94848" />
      <rect x="15.500" y="5.300" width="296.500" height="531.500" fill="none" stroke="#ccc" strokeWidth="1.400" />
      <path d="M88 483L99 494M88 495V483.500H100.500M105 500L116 511M116 498V510.500H103.500" fill="none" stroke="#e0560f" strokeWidth="3" />
    </svg>
    <div className="h-[53px] pt-[3px] flex items-center text-[26px] leading-none text-[#666]">
      <span className="w-[13px] h-[13px] bg-[#5cba45]" />
      <span className="ml-[9px]">套牢</span>
      <span className="ml-[38px] w-[13px] h-[13px] bg-[#e94848]" />
      <span className="ml-[9px]">获利</span>
    </div>
    <Row label="获利比例" value="81.72%" spacing="tracking-[-1.200px]" />
    <Row label="平均成本" value="12.35" spacing="tracking-[-1.400px]" />
    <div className="mt-[6px] mb-[7px] h-[63px] rounded-[6px] bg-[#f6f7fa] p-[5px] flex text-[29px] leading-none">
      <div className="w-[143px] rounded-[6px] bg-white text-[#222] text-[30px] font-bold flex items-center justify-center tracking-[-0.300px]">90%筹码</div>
      <div className="flex-1 text-[#666] flex items-center justify-center tracking-[0.300px]">70%筹码</div>
    </div>
    <Row label="价格区间" value="11.20-14.23" spacing="tracking-[-2.500px]" />
    <Row label="集中度" value="11.91%" spacing="tracking-[-2.800px]" />
    <Row label="说明" value="2026-01-08" info />
  </aside>
)

const Banner = () => (
  <section className="mx-[16px] mt-[15px] h-[79px] rounded-full bg-[#fcece2] flex items-center pl-[26px] pr-[33px] text-[#e0560f]">
    <svg viewBox="0 0 39 35" className="w-[39px] h-[35px]" fill="#ea5504">
      <path d="M0 10h4v14H0zM8 10L35 2V0h4v35h-4v-2l-11 -3l-4 1l-2 -2l-3 1l-1 -4l-6 -2z" />
    </svg>
    <div className="relative ml-[13px] w-[810px] overflow-hidden flex">
      <span className="-ml-[2px] text-[34px] leading-[50px] whitespace-nowrap">慌！收盘前半小时，公布【尾盘机会名单】立即查看&gt;</span>
      <span className="absolute left-0 top-0 w-[34px] h-full bg-gradient-to-r from-[#fcece2] to-transparent" />
    </div>
    <span className="ml-auto w-[1.500px] h-[33px] bg-[#e0560f]" />
    <svg viewBox="0 0 30 30" className="ml-[14px] w-[30px] h-[30px]" stroke="#e0560f" strokeWidth="2.800">
      <path d="M1 1L29 29M29 1L1 29" />
    </svg>
  </section>
)

const InfoTabs = () => (
  <nav className="mt-[15px] h-[92px] border-y border-[#d6d6d6] flex px-[33px] text-[38px] leading-none text-[#666]">
    {['股吧', '盘口', '资讯', '公告', '研报', '财务', '资料'].map((tab, i) => (
      <div key={tab} className={`relative flex-1 flex items-center justify-center ${i === 0 ? 'text-[#e0560f]' : ''}`}>
        {tab}
        {i === 0 && <span className="absolute bottom-[7px] w-[53px] h-[5px] rounded-full bg-[#ea5504]" />}
      </div>
    ))}
  </nav>
)

const FeedPeek = () => (
  <section className="h-[38px] pt-[11px] px-[32px] flex gap-[16px] overflow-hidden">
    {[0, 1].map((n) => (
      <div key={n} className="relative w-[473px] h-[60px] rounded-[20px] overflow-hidden bg-[#fef5f3] flex justify-end">
        <span className={n === 0 ? 'w-[198px] bg-[#feefed]' : 'w-[230px] bg-[#feefed]'} />
        <span className="absolute left-[35px] top-[26px] w-[14px] h-[14px] rounded-full bg-[#b8505a]" />
      </div>
    ))}
  </section>
)

const NavItem = ({ label, children }: { label: string; children: ReactNode }) => (
  <div className="flex-1 flex flex-col items-center pt-[7px] text-[31px] leading-none text-[#666]">
    <svg viewBox="0 0 56 56" className="w-[56px] h-[56px] mb-[14px] overflow-visible" fill="none" stroke="#666" strokeWidth="2.600" strokeLinecap="round" strokeLinejoin="round">
      {children}
    </svg>
    {label}
  </div>
)

const BottomNav = () => (
  <footer className="h-[119px] bg-[#f6f7f9] border-t border-[#d6d6d6] flex">
    <div className="relative w-[241px] whitespace-nowrap">
      <span className="absolute left-[111px] top-[8px] border-x-[10px] border-x-transparent border-b-[6px] border-b-[#777]" />
      <div className="pt-[25px] pl-[53px] text-[36px] leading-[38px] text-[#dc2c2c] tracking-[0.800px]">4086.83</div>
      <div className="pt-[5px] pl-[35px] flex items-center leading-[36px]">
        <span className="text-[32px] text-[#666]">上证</span>
        <span className="ml-[42px] text-[34px] text-[#dc2c2c] tracking-[1px]">0.03%</span>
      </div>
    </div>
    <NavItem label="交易">
      <path d="M14 7Q30 -2 43 9Q56 21 51 38L57 34M43 48Q28 58 13 47Q0 35 6 15L-1 18M20 17L28 26L36 17M28 26V41M19 27H37M19 34H37" />
    </NavItem>
    <NavItem label="发帖">
      <path d="M36 5H10Q4 5 4 10V46Q4 51 10 51H46Q51 51 51 46V19" />
      <path d="M48 8L51 5.500" strokeWidth="5" />
      <path d="M22 35L25 28L43 10L47 14L28 32z" fill="#666" strokeWidth="1" />
    </NavItem>
    <NavItem label="功能">
      <rect x="6" y="6" width="20" height="20" rx="3" />
      <rect x="6" y="31" width="20" height="20" rx="3" />
      <rect x="30" y="31" width="20" height="20" rx="3" />
      <rect x="32" y="8" width="16" height="16" rx="2.500" transform="rotate(45 40 16)" />
    </NavItem>
    <NavItem label="设自选">
      <circle cx="28" cy="28" r="24" />
      <g fill="#666" stroke="none">
        <circle cx="17.500" cy="28" r="3" />
        <circle cx="28" cy="28" r="3" />
        <circle cx="38.500" cy="28" r="3" />
      </g>
    </NavItem>
  </footer>
)

const SystemNav = () => (
  <div className="h-[124px]">
    <div className="mx-[49px] h-px bg-[#e2e4e6]" />
    <div className="h-[123px] flex items-center justify-between pl-[273px] pr-[290px]">
      <svg viewBox="0 0 36 34" className="w-[36px] h-[34px]" stroke="#777" strokeWidth="3.600" strokeLinecap="round">
        <path d="M2 2.500H34M2 17H34M2 31.500H34" />
      </svg>
      <div className="w-[36px] h-[36px] mr-[6px] border-[4px] border-[#777] rounded-[10px]" />
      <svg viewBox="0 0 20 36" className="w-[20px] h-[36px]" fill="none" stroke="#777" strokeWidth="3.600" strokeLinecap="round">
        <path d="M18 2L3 18L18 34" />
      </svg>
    </div>
  </div>
)

export default function App() {
  return (
    <div className={`w-[1080px] h-[2400px] overflow-hidden bg-white ${FONT}`}>
      <StatusBar />
      <Header />
      <Quote />
      <Notice />
      <PeriodTabs />
      <MaLegend />
      <main className="flex h-[1174px] pl-3">
        <div className="w-[728px]">
          <KLine />
          <VolumeHeader />
          <VolumeChart />
          <MacdHeader />
          <MacdChart />
          <DateAxis />
        </div>
        <ChipPanel />
      </main>
      <Banner />
      <InfoTabs />
      <FeedPeek />
      <BottomNav />
      <SystemNav />
    </div>
  )
}
